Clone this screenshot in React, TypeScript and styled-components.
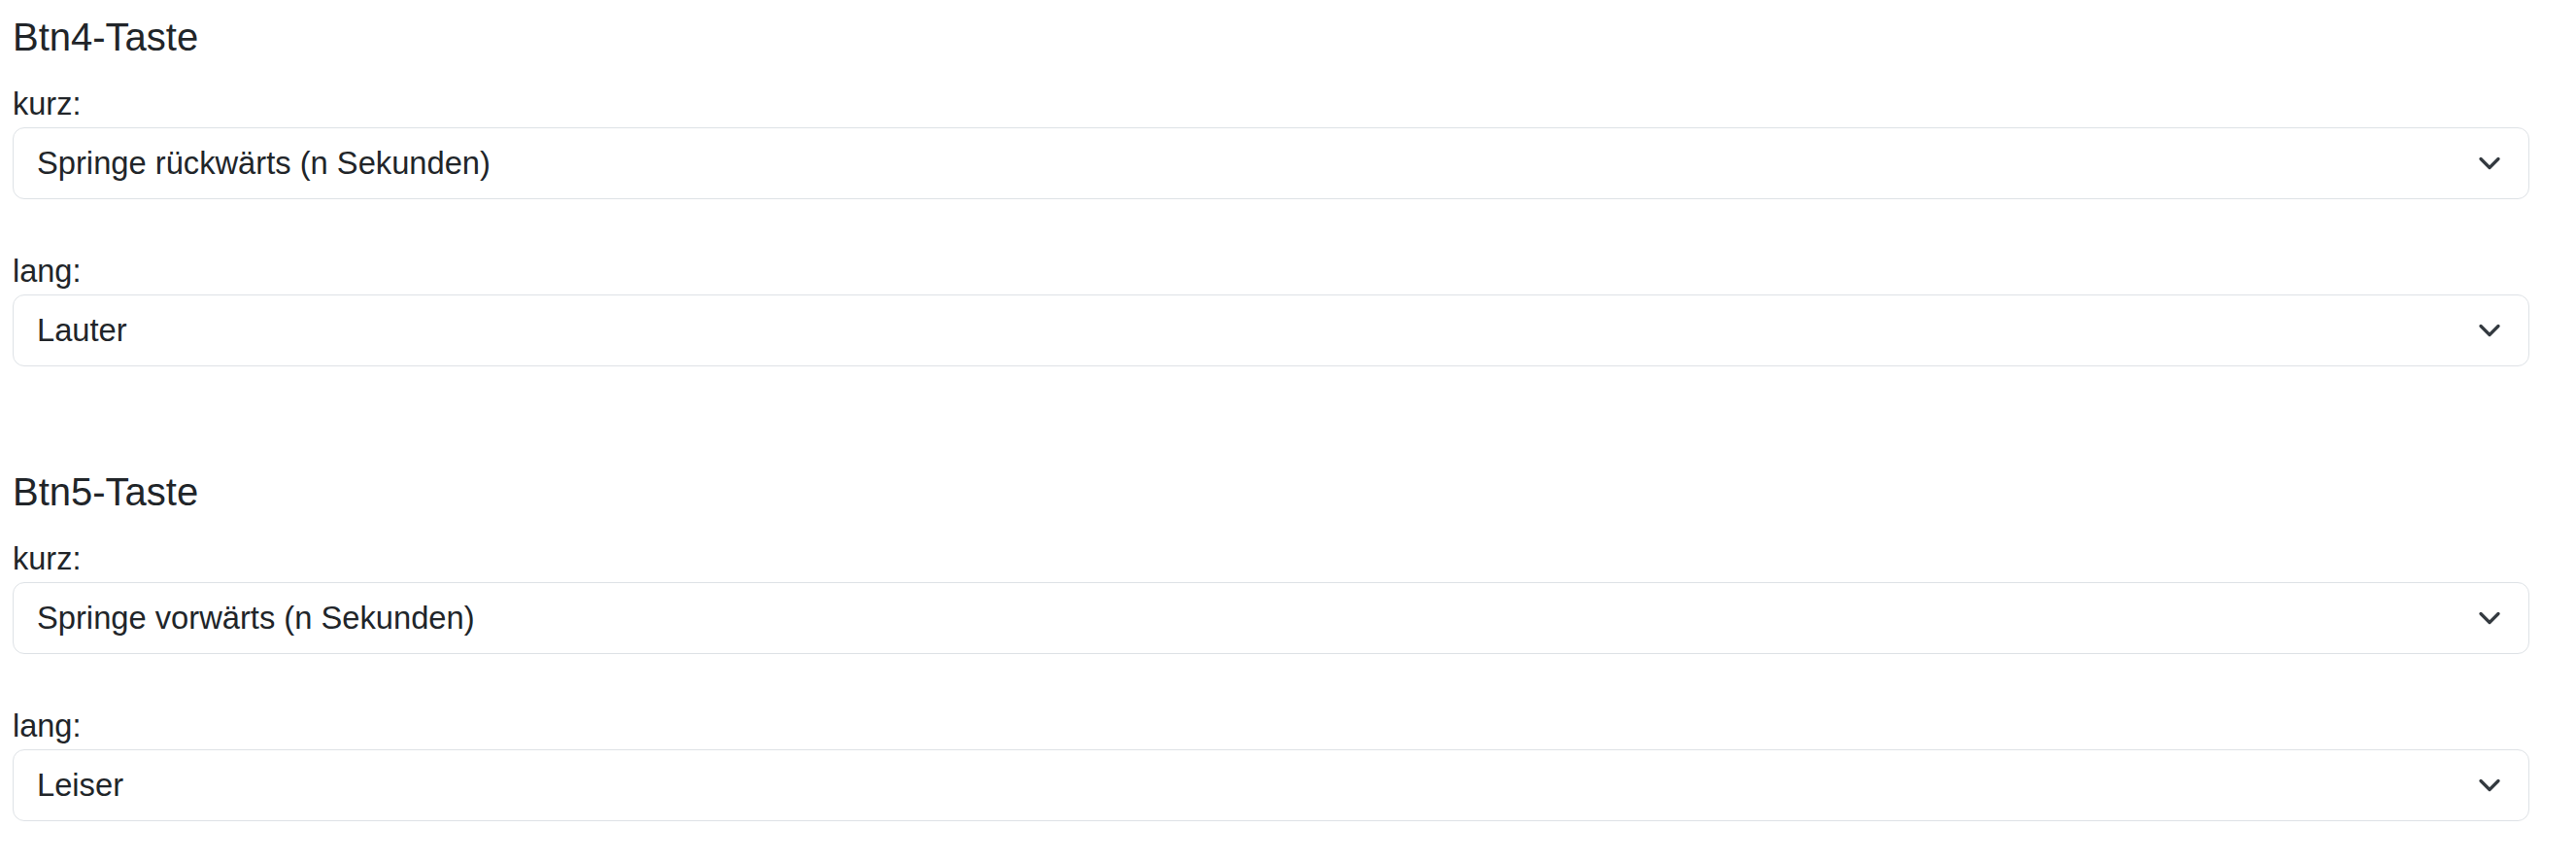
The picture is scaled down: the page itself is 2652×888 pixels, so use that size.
import { createGlobalStyle } from "styled-components";
import styled from "styled-components";

const GlobalStyle = createGlobalStyle`
  html, body {
    margin: 0;
    padding: 0;
    background: #fff;
  }
  body {
    font-family: "Liberation Sans", Arial, sans-serif;
    color: #212529;
    font-size: 32px;
    line-height: 1.5;
  }
`;

const sections = [
  {
    title: "Btn4-Taste",
    short: "Springe rückwärts (n Sekunden)",
    long: "Lauter",
  },
  {
    title: "Btn5-Taste",
    short: "Springe vorwärts (n Sekunden)",
    long: "Leiser",
  },
];

export default function App() {
  return (
    <>
      <GlobalStyle />
      <Page>
        {sections.map((s) => (
          <Section key={s.title}>
            <Heading>{s.title}</Heading>
            <Field label="kurz:" value={s.short} />
            <Field label="lang:" value={s.long} />
          </Section>
        ))}
      </Page>
    </>
  );
}

function Field({ label, value }: { label: string; value: string }) {
  return (
    <FieldWrapper>
      <Label>{label}</Label>
      <SelectWrapper>
        <Select defaultValue={value}>
          <option>{value}</option>
        </Select>
        <Chevron viewBox="0 0 16 16" aria-hidden>
          <path
            d="M2 5l6 6 6-6"
            fill="none"
            stroke="#343a40"
            strokeWidth="2.2"
            strokeLinecap="round"
            strokeLinejoin="round"
          />
        </Chevron>
      </SelectWrapper>
    </FieldWrapper>
  );
}

const Page = styled.div`
  display: flex;
  flex-direction: column;
  gap: 105px;
  padding: 14px 48px 0 13px;
`;

const Section = styled.section`
  display: flex;
  flex-direction: column;
`;

const Heading = styled.h5`
  margin: 0 0 21px;
  font-size: 40px;
  font-weight: 400;
  line-height: 48px;
  color: #212529;
`;

const FieldWrapper = styled.div`
  display: flex;
  flex-direction: column;
  & + & {
    margin-top: 50px;
  }
`;

const Label = styled.label`
  font-size: 32.5px;
  line-height: 48px;
`;

const SelectWrapper = styled.div`
  position: relative;
`;

const Select = styled.select`
  appearance: none;
  -webkit-appearance: none;
  display: block;
  width: 100%;
  box-sizing: border-box;
  height: 74px;
  padding: 12px 72px 12px 24px;
  font-family: "Liberation Sans", Arial, sans-serif;
  font-size: 32.7px;
  line-height: 48px;
  color: #212529;
  background: #fff;
  border: 1px solid #dee2e6;
  border-radius: 12px;
  outline: none;
`;

const Chevron = styled.svg`
  position: absolute;
  right: 29px;
  top: 50%;
  width: 24px;
  height: 24px;
  transform: translateY(-50%);
  pointer-events: none;
`;
